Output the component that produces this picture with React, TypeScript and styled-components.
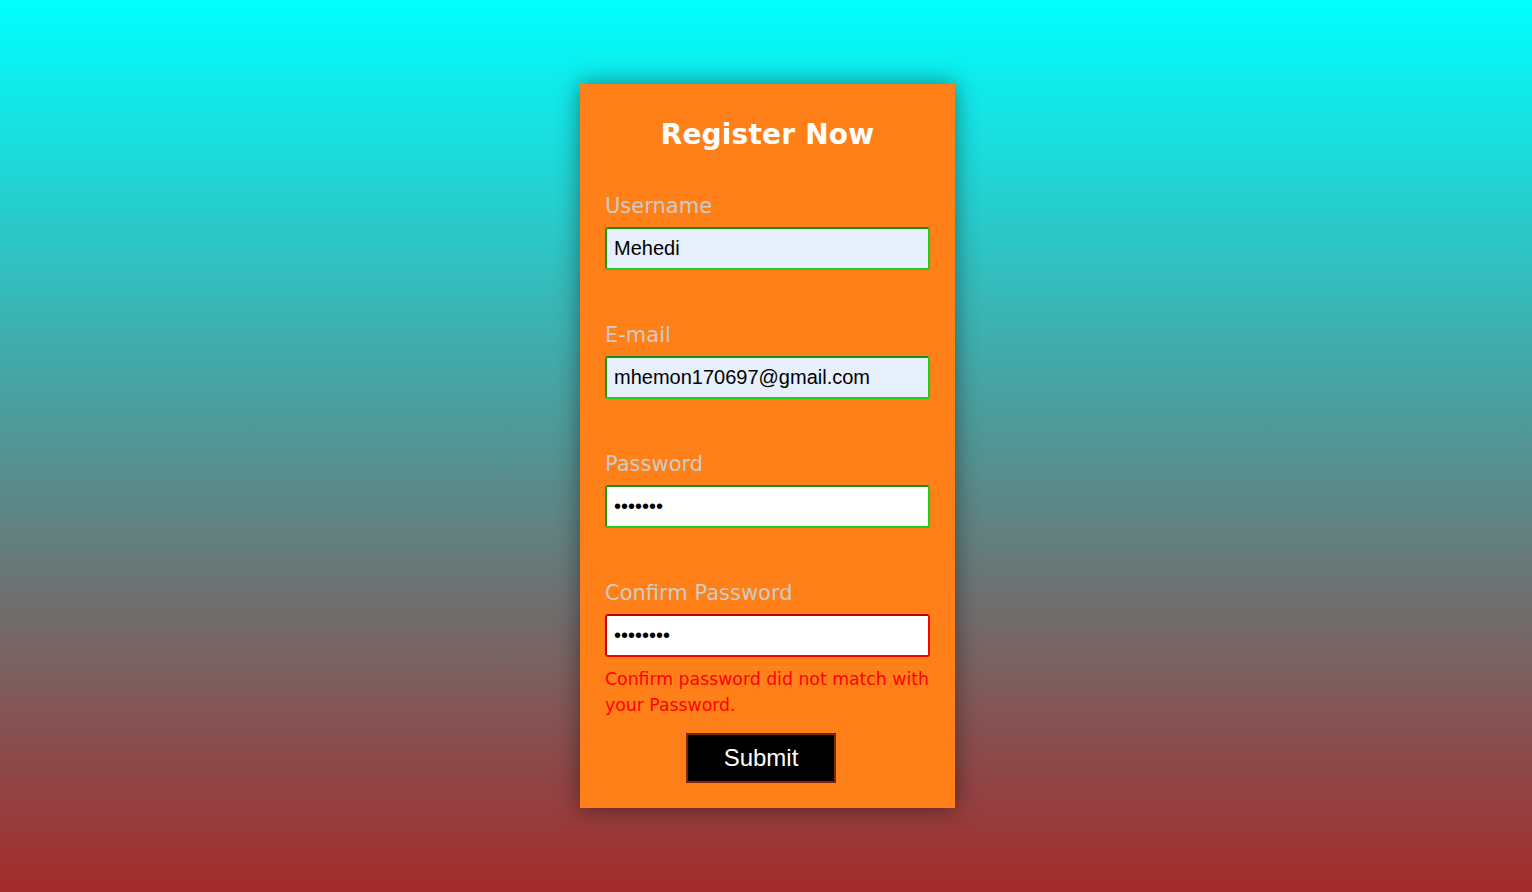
import React from "react";
import styled, { createGlobalStyle } from "styled-components";

const GlobalStyle = createGlobalStyle`
  html, body { margin: 0; padding: 0; }
  body {
    min-height: 100vh;
    background: linear-gradient(to bottom, #00ffff 0%, #a52a2a 100%);
    font-family: "Comic Sans MS", "DejaVu Sans", sans-serif;
  }
`;

const Page = styled.div`
  height: 892px;
  display: flex;
  justify-content: center;
  align-items: flex-start;
  padding: 84px 0 0 3px;
  box-sizing: border-box;
`;

const Card = styled.form`
  width: 375px;
  box-sizing: border-box;
  padding: 24px 25px 25px;
  background: #ff8019;
  box-shadow: 0 0 22px rgba(0, 0, 0, 0.45);
  display: flex;
  flex-direction: column;
`;

const Title = styled.h2`
  margin: 0 0 29px;
  text-align: center;
  color: #ffffff;
  font-size: 28px;
  line-height: 54px;
  font-weight: bold;
  letter-spacing: 0.2px;
`;

const Field = styled.div<{ $last?: boolean }>`
  display: flex;
  flex-direction: column;
  gap: 5px;
  margin-bottom: ${(p) => (p.$last ? "9px" : "50px")};
`;

const Label = styled.label`
  color: #d0cbc4;
  font-size: 21px;
  line-height: 31px;
`;

const Input = styled.input<{ $ok: boolean; $autofill?: boolean }>`
  width: 325px;
  height: 43px;
  box-sizing: border-box;
  margin: 0;
  padding: 0 7px;
  border-width: 2px;
  border-style: solid;
  border-color: ${(p) =>
    p.$ok ? "#16901a #21cc21 #21cc21 #189a1a" : "#c00000 #ff0000 #ff0000 #cc0000"};
  border-radius: 3px;
  background: ${(p) => (p.$autofill ? "#e8f0fe" : "#ffffff")};
  color: #000;
  font-family: "Liberation Sans", Arial, sans-serif;
  font-size: 20px;
  outline: none;
`;

const ErrorText = styled.p`
  margin: 0 0 15px;
  color: #ff0000;
  font-size: 17.3px;
  line-height: 26px;
  width: 330px;
`;

const Submit = styled.button`
  width: 150px;
  height: 50px;
  margin-left: 81px;
  box-sizing: border-box;
  background: #000;
  color: #fff;
  border: 2px solid #7a2414;
  font-family: "Liberation Sans", Arial, sans-serif;
  font-size: 24px;
  cursor: pointer;
  padding: 0;
`;

export default function App() {
  return (
    <>
      <GlobalStyle />
      <Page>
        <Card onSubmit={(e) => e.preventDefault()}>
          <Title>Register Now</Title>
          <Field>
            <Label>Username</Label>
            <Input $ok $autofill type="text" defaultValue="Mehedi" />
          </Field>
          <Field>
            <Label>E-mail</Label>
            <Input $ok $autofill type="email" defaultValue="mhemon170697@gmail.com" />
          </Field>
          <Field>
            <Label>Password</Label>
            <Input $ok type="password" defaultValue="1234567" />
          </Field>
          <Field $last>
            <Label>Confirm Password</Label>
            <Input $ok={false} type="password" defaultValue="12345678" />
          </Field>
          <ErrorText>Confirm password did not match with your Password.</ErrorText>
          <Submit type="submit">Submit</Submit>
        </Card>
      </Page>
    </>
  );
}
